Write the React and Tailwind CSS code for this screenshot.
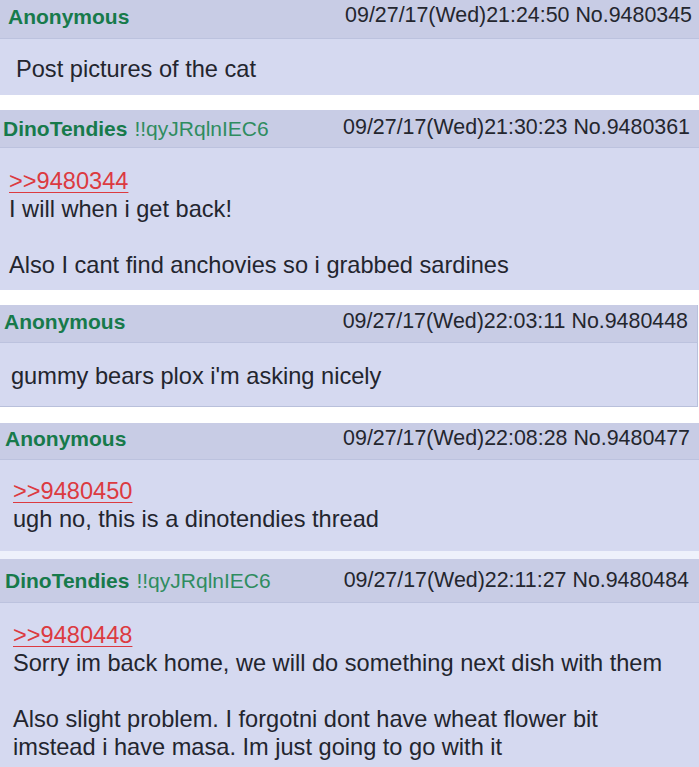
const posts = [
  {
    name: 'Anonymous',
    date: '09/27/17(Wed)21:24:50 No.9480345',
    head: 'h-[39px] pl-2 pr-[7px] pb-[6px]',
    body: 'pt-4 pb-3 pl-4',
    lines: ['Post pictures of the cat'],
    after: 'h-[15px] bg-white',
  },
  {
    name: 'DinoTendies',
    trip: '!!qyJRqlnIEC6',
    date: '09/27/17(Wed)21:30:23 No.9480361',
    head: 'h-[38px] pl-[3px] pr-[9px] pb-[1px]',
    body: 'pt-[19px] pb-[11px] pl-[9px]',
    quote: '>>9480344',
    lines: ['I will when i get back!', '', 'Also I cant find anchovies so i grabbed sardines'],
    after: 'h-[15px] bg-white',
  },
  {
    name: 'Anonymous',
    date: '09/27/17(Wed)22:03:11 No.9480448',
    head: 'h-[38px] pl-1 pr-[9px] pb-[4px]',
    body: 'pt-[19px] pb-4 pl-[11px]',
    lines: ["gummy bears plox i'm asking nicely"],
    boxed: true,
    after: 'h-[16px] bg-white',
  },
  {
    name: 'Anonymous',
    date: '09/27/17(Wed)22:08:28 No.9480477',
    head: 'h-[37px] pl-[5px] pr-[9px] pb-[5px]',
    body: 'pt-[17px] pb-[18px] pl-[13px]',
    quote: '>>9480450',
    lines: ['ugh no, this is a dinotendies thread'],
    after: 'h-[8px] bg-[#eef1fb]',
  },
  {
    name: 'DinoTendies',
    trip: '!!qyJRqlnIEC6',
    date: '09/27/17(Wed)22:11:27 No.9480484',
    head: 'h-[44px] pl-[5px] pr-[10px]',
    body: 'pt-[18px] pb-4 pl-[13px]',
    quote: '>>9480448',
    lines: [
      'Sorry im back home, we will do something next dish with them',
      '',
      'Also slight problem. I forgotni dont have wheat flower bit',
      'imstead i have masa. Im just going to go with it',
    ],
  },
];

function Post({ p }) {
  return (
    <>
      <div className={p.boxed ? 'border-r border-b border-[#b9c0db] w-[698px]' : ''}>
        <div className={`flex items-center justify-between bg-[#c8cce5] border-b border-[#bcc2de] ${p.head}`}>
          <div className="text-[21px] leading-none whitespace-nowrap">
            <span className="font-bold text-[#177a4b]">{p.name}</span>
            {p.trip && <span className="ml-[7px] text-[#2f8c60]">{p.trip}</span>}
          </div>
          <span className="text-[21.4px] leading-none text-[#24262e] whitespace-nowrap">{p.date}</span>
        </div>
        <div className={`bg-[#d5d9f0] text-[23.6px] leading-[28px] text-[#23252e] ${p.body}`}>
          {p.quote && (
            <div>
              <span className="text-[#dc3a40] underline underline-offset-[3px] decoration-1">{p.quote}</span>
            </div>
          )}
          {p.lines.map((l, i) => (
            <div key={i} className="h-[28px] whitespace-nowrap">{l}</div>
          ))}
        </div>
      </div>
      {p.after && <div className={p.after} />}
    </>
  );
}

export default function App() {
  return (
    <div className="w-[699px] h-[767px] overflow-hidden bg-white font-['Liberation_Sans',Arial,sans-serif]">
      {posts.map((p, i) => (
        <Post key={i} p={p} />
      ))}
    </div>
  );
}
